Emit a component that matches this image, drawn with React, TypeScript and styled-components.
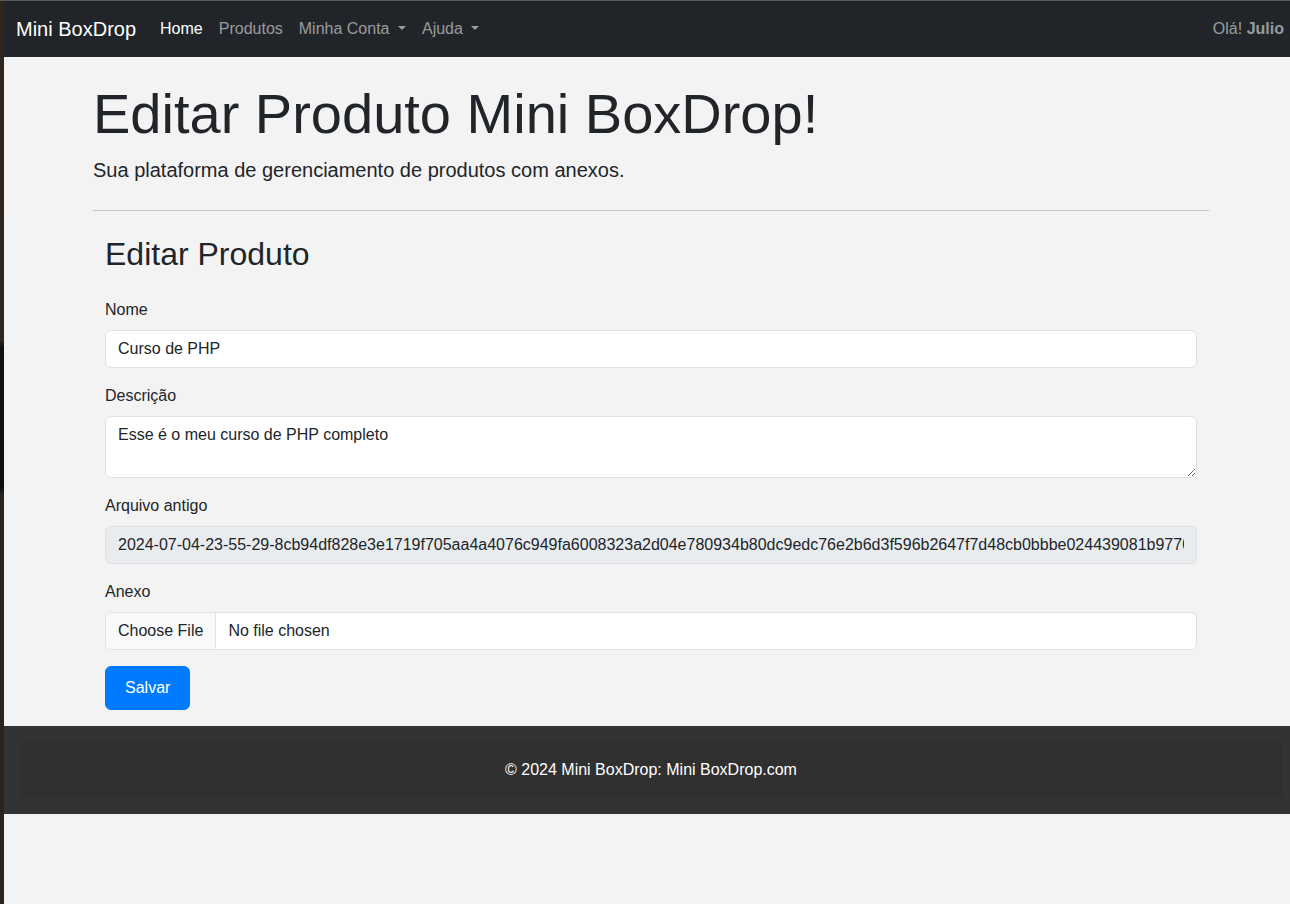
import React from "react";
import styled, { createGlobalStyle } from "styled-components";

const oldFile =
  "2024-07-04-23-55-29-8cb94df828e3e1719f705aa4a4076c949fa6008323a2d04e780934b80dc9edc76e2b6d3f596b2647f7d48cb0bbbe024439081b9770c2d1a.pdf";

const App: React.FC = () => {
  return (
    <>
      <GlobalStyle />
      <TopLine />
      <Screen>
        <DesktopEdge />
        <Page>
          <Navbar>
            <Brand>Mini BoxDrop</Brand>
            <NavList>
              <NavLink $active>Home</NavLink>
              <NavLink>Produtos</NavLink>
              <NavLink $dropdown>Minha Conta</NavLink>
              <NavLink $dropdown>Ajuda</NavLink>
            </NavList>
            <Greeting>
              Olá! <strong>Julio</strong>
            </Greeting>
          </Navbar>

          <Container>
            <Title>Editar Produto Mini BoxDrop!</Title>
            <Lead>Sua plataforma de gerenciamento de produtos com anexos.</Lead>
            <Divider />

            <FormSection>
              <FormTitle>Editar Produto</FormTitle>
              <form onSubmit={(e) => e.preventDefault()}>
                <Field>
                  <Label htmlFor="nome">Nome</Label>
                  <Input id="nome" type="text" defaultValue="Curso de PHP" />
                </Field>
                <Field>
                  <Label htmlFor="descricao">Descrição</Label>
                  <TextArea
                    id="descricao"
                    rows={2}
                    defaultValue="Esse é o meu curso de PHP completo"
                  />
                </Field>
                <Field>
                  <Label htmlFor="antigo">Arquivo antigo</Label>
                  <Input id="antigo" type="text" value={oldFile} disabled readOnly />
                </Field>
                <Field>
                  <Label htmlFor="anexo">Anexo</Label>
                  <FileInput id="anexo" type="file" />
                </Field>
                <SaveButton type="submit">Salvar</SaveButton>
              </form>
            </FormSection>
          </Container>

          <Footer>
            <FooterInner>© 2024 Mini BoxDrop: Mini BoxDrop.com</FooterInner>
          </Footer>
        </Page>
      </Screen>
    </>
  );
};

export default App;

const GlobalStyle = createGlobalStyle`
  html, body {
    margin: 0;
    padding: 0;
    overflow: hidden;
    background: #f3f3f3;
  }
  body {
    font-family: "Liberation Sans", Arial, sans-serif;
    font-size: 16px;
    line-height: 1.5;
    color: #212529;
  }
  *, *::before, *::after {
    box-sizing: border-box;
  }
`;

const TopLine = styled.div`
  height: 1px;
  background: #5b5b5b;
`;

const Screen = styled.div`
  display: flex;
  min-height: 903px;
`;

const DesktopEdge = styled.div`
  width: 4px;
  flex-shrink: 0;
  background: linear-gradient(
    to bottom,
    #2f2620 0px,
    #2e2620 340px,
    #13110f 346px,
    #100e0c 486px,
    #2a221c 494px,
    #2b231d 100%
  );
`;

const Page = styled.div`
  width: 1294px;
  flex-shrink: 0;
  background: #f3f3f3;
`;

const Navbar = styled.nav`
  display: flex;
  align-items: center;
  height: 56px;
  padding: 0 14px 0 12px;
  background: #212529;
`;

const Brand = styled.a`
  font-size: 20px;
  line-height: 30px;
  color: #fff;
  margin-right: 16px;
  text-decoration: none;
`;

const NavList = styled.div`
  display: flex;
  align-items: center;
`;

const NavLink = styled.a<{ $active?: boolean; $dropdown?: boolean }>`
  padding: 8px;
  line-height: 24px;
  color: ${(p) => (p.$active ? "#fff" : "rgba(255, 255, 255, 0.55)")};
  text-decoration: none;
  cursor: pointer;

  ${(p) =>
    p.$dropdown &&
    `
    &::after {
      content: "";
      display: inline-block;
      margin-left: 0.53em;
      vertical-align: 0.255em;
      border-top: 0.3em solid;
      border-right: 0.3em solid transparent;
      border-left: 0.3em solid transparent;
      border-bottom: 0;
    }
  `}
`;

const Greeting = styled.span`
  margin-left: auto;
  color: rgba(255, 255, 255, 0.55);
  line-height: 24px;

  strong {
    font-weight: 700;
  }
`;

const Container = styled.main`
  width: 1140px;
  margin: 0 auto;
  padding: 23px 12px 16px;
`;

const Title = styled.h1`
  font-size: 56px;
  font-weight: 400;
  line-height: 1.2;
  margin: 0 0 8px;
`;

const Lead = styled.p`
  font-size: 20px;
  line-height: 30px;
  margin: 0 0 25px;
`;

const Divider = styled.hr`
  margin: 0;
  border: 0;
  border-top: 1px solid #c6c6c6;
`;

const FormSection = styled.section`
  padding: 24px 12px 0;
`;

const FormTitle = styled.h2`
  font-size: 32px;
  font-weight: 400;
  line-height: 1.2;
  margin: 0 0 24px;
`;

const Field = styled.div`
  margin-bottom: 16px;
`;

const Label = styled.label`
  display: inline-block;
  margin-bottom: 8px;
  line-height: 24px;
`;

const controlStyles = `
  display: block;
  width: 100%;
  padding: 6px 12px;
  font-family: "Liberation Sans", Arial, sans-serif;
  font-size: 16px;
  line-height: 24px;
  color: #212529;
  background: #fff;
  border: 1px solid #dee2e6;
  border-radius: 6px;
  outline: none;
`;

const Input = styled.input`
  ${controlStyles}
  height: 38px;

  &:disabled {
    background: #e9ecef;
    color: #212529;
    opacity: 1;
  }
`;

const TextArea = styled.textarea`
  ${controlStyles}
  height: 62px;
  resize: vertical;
`;

const FileInput = styled.input`
  ${controlStyles}
  height: 38px;
  overflow: hidden;

  &::file-selector-button {
    padding: 6px 12px;
    margin: -6px 12px -6px -12px;
    font-family: "Liberation Sans", Arial, sans-serif;
    font-size: 16px;
    line-height: 24px;
    color: #212529;
    background: #f8f9fa;
    border: 0;
    border-right: 1px solid #dee2e6;
    border-radius: 0;
  }
`;

const SaveButton = styled.button`
  display: inline-block;
  padding: 9px 19px;
  font-family: "Liberation Sans", Arial, sans-serif;
  font-size: 16px;
  line-height: 24px;
  color: #fff;
  background: #007bff;
  border: 1px solid #007bff;
  border-radius: 6px;
  cursor: pointer;
`;

const Footer = styled.footer`
  padding: 16px;
  background: #333333;
`;

const FooterInner = styled.div`
  padding: 16px;
  background: #303030;
  color: #fff;
  text-align: center;
  line-height: 24px;
`;
